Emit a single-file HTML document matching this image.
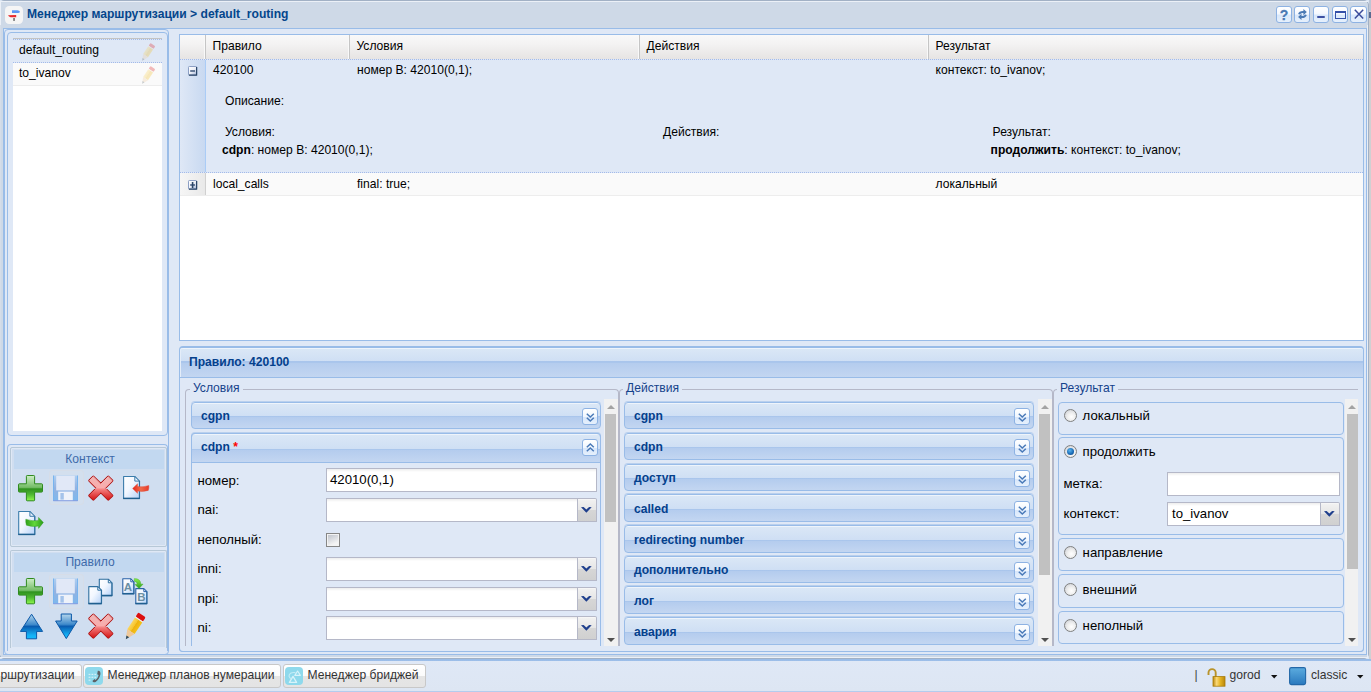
<!DOCTYPE html>
<html lang="ru">
<head>
<meta charset="utf-8">
<title>Менеджер маршрутизации</title>
<style>
html,body{margin:0;padding:0;overflow:hidden;}
body{width:1371px;height:692px;overflow:hidden;position:relative;background:#dbe6f4;font-family:"Liberation Sans",sans-serif;font-size:12.1px;color:#000;}
div,span,i,u,b{box-sizing:border-box;}
.a{position:absolute;}
.t{position:absolute;white-space:nowrap;line-height:14px;}
.b{font-weight:bold;}
.f{font-size:13.2px;line-height:15px;}
svg{position:absolute;overflow:visible;}
#win{position:absolute;left:-1px;top:0;width:1370px;height:659px;background:#ced9e7;border:1px solid #a2b1c5;border-radius:5px;}
.tool{position:absolute;top:6px;width:16px;height:17px;border:1px solid #8db2e3;border-radius:3px;background:linear-gradient(#fff 0%,#f4f8ff 45%,#d9e8fb 55%,#e6f0fc 100%);}
.frame{position:absolute;border:1px solid #99bce8;border-radius:4px;background:#dfe8f6;}
.acc{position:absolute;height:27px;border:1px solid #99bce8;border-radius:4px;background:linear-gradient(#eef4fb 0,#eef4fb 1px,#dae7f6 1px,#cfdff4 52%,#a9c5ec 52%,#aac6ec 56%,#b4ccee 57%,#c3d6f1 100%);box-shadow:0 -1px 0 rgba(153,188,232,0.55);}
.acc span{position:absolute;left:9px;top:6px;line-height:14px;font-weight:bold;color:#04408c;white-space:nowrap;}
.acc i{position:absolute;right:2px;top:5px;width:16px;height:17px;border:1px solid #8db2e3;border-radius:3px;background:linear-gradient(#fff 0%,#f1f7fe 50%,#d8e7fb 55%,#e6f0fc 100%);}
.inp{position:absolute;height:24px;border:1px solid #b5b8c8;background:#fff linear-gradient(#ededed 0,#fff 3px);}
.trig{position:absolute;width:19px;height:24px;border:1px solid #b5b8c8;border-left:0;border-radius:0 2px 0 0;background:linear-gradient(#f2f2f2 0%,#e6e6e6 48%,#d6d6d6 52%,#d0d0d0 100%);box-shadow:inset 0 1px 0 #f6f6f6;}
.radio{position:absolute;width:13px;height:13px;border-radius:50%;border:1px solid #7f8080;background:radial-gradient(circle at 58% 62%,#ffffff 0%,#efefef 40%,#c6c9d0 100%);}
.rp{position:absolute;border:1px solid #99bce8;border-radius:4px;background:#dfe8f6;}
.fs{position:absolute;border:1px solid #b5b8c8;border-radius:4px;}
.fsl{position:absolute;padding:0 3px;background:#dfe8f6;color:#15428b;line-height:14px;white-space:nowrap;}
.sb{position:absolute;width:14px;background:#f1f1f1;}
.sb u{position:absolute;left:1px;width:11px;background:#c1c1c1;}
.sb:before{content:"";position:absolute;left:3px;top:6px;border:4px solid transparent;border-top:0;border-bottom:4px solid #a3a3a3;}
.sb:after{content:"";position:absolute;left:3px;bottom:4px;border:4px solid transparent;border-bottom:0;border-top:4px solid #505050;}
.bg{position:absolute;border:1px solid #b7c8d7;border-radius:2px;background:#d0def0;box-shadow:inset 0 0 0 1px #dfe8f5;}
.bgh{position:absolute;left:3px;top:2px;right:2px;height:19px;background:#c2d8f0;color:#3e6aaa;text-align:center;line-height:18px;padding-left:2px;}
.gh{position:absolute;top:0;height:24px;border-right:1px solid #c5c5c5;box-shadow:inset -1px 0 0 #f9f9f9;}
.tb{position:absolute;top:664px;height:24px;border:1px solid #c8c8c8;border-radius:3px;background:linear-gradient(#ffffff 0%,#fbfbfb 48%,#e5e5e5 52%,#e4e4e4 100%);}
</style>
</head>
<body>

<svg width="0" height="0" style="left:0;top:0;"><defs><linearGradient id="gPlus" x1="0" y1="0" x2="0" y2="1"><stop offset="0" stop-color="#cdeec6"/><stop offset="0.47" stop-color="#74bd66"/><stop offset="0.53" stop-color="#2f921f"/><stop offset="0.75" stop-color="#4fb832"/><stop offset="1" stop-color="#8ef84c"/></linearGradient><linearGradient id="gX" x1="0" y1="0" x2="0" y2="1"><stop offset="0" stop-color="#f0b4b4"/><stop offset="0.48" stop-color="#f9acac"/><stop offset="0.58" stop-color="#f27878"/><stop offset="1" stop-color="#d61a1a"/></linearGradient><linearGradient id="gDoc" x1="0" y1="0" x2="1" y2="1"><stop offset="0" stop-color="#ffffff"/><stop offset="0.45" stop-color="#f2f7ff"/><stop offset="1" stop-color="#b5d2f8"/></linearGradient><linearGradient id="gUp" x1="0" y1="0" x2="0" y2="1"><stop offset="0" stop-color="#b5d6ec"/><stop offset="0.42" stop-color="#3f8acb"/><stop offset="0.5" stop-color="#0a5cb0"/><stop offset="0.85" stop-color="#14b0f4"/><stop offset="1" stop-color="#12bcfc"/></linearGradient><linearGradient id="gSave" x1="0" y1="0" x2="0" y2="1"><stop offset="0" stop-color="#a9cdf3"/><stop offset="0.5" stop-color="#8daee0"/><stop offset="1" stop-color="#74b4ee"/></linearGradient><linearGradient id="gRed" x1="0" y1="0" x2="1" y2="0"><stop offset="0" stop-color="#e8281c"/><stop offset="0.5" stop-color="#ee6a4a"/><stop offset="1" stop-color="#e83a2a"/></linearGradient><linearGradient id="gGreen" x1="0" y1="0" x2="1" y2="0"><stop offset="0" stop-color="#2fa01c"/><stop offset="0.5" stop-color="#62d83a"/><stop offset="1" stop-color="#2a9a1a"/></linearGradient><linearGradient id="gGreenV" x1="0" y1="0" x2="0" y2="1"><stop offset="0" stop-color="#8cf04c"/><stop offset="1" stop-color="#2a9a1a"/></linearGradient><linearGradient id="gLock" x1="0" y1="0" x2="1" y2="0"><stop offset="0" stop-color="#b8860b"/><stop offset="0.3" stop-color="#fbd978"/><stop offset="0.6" stop-color="#e5b422"/><stop offset="1" stop-color="#b8860b"/></linearGradient><linearGradient id="gSq" x1="0" y1="0" x2="0" y2="1"><stop offset="0" stop-color="#5cacdf"/><stop offset="1" stop-color="#2a79be"/></linearGradient><linearGradient id="gExp" x1="0" y1="0" x2="1" y2="1"><stop offset="0" stop-color="#ffffff"/><stop offset="0.5" stop-color="#eef1f8"/><stop offset="1" stop-color="#9fb0d4"/></linearGradient><linearGradient id="gPen" x1="0" y1="0" x2="1" y2="0"><stop offset="0" stop-color="#fbd560"/><stop offset="0.45" stop-color="#f6c62c"/><stop offset="0.5" stop-color="#eeb010"/><stop offset="1" stop-color="#f4c21a"/></linearGradient></defs></svg>
<div class="a" style="left:1369px;top:0;width:2px;height:659px;background:#cfd0d2;"></div>
<div class="a" style="left:1369px;top:0;width:2px;height:11px;background:#bcc6d6;"></div>
<div class="a" style="left:1369px;top:12px;width:2px;height:6px;background:#5a6a90;"></div>
<div id="win"></div>
<div class="a" style="left:0;top:1px;width:1368px;height:1px;background:#ebf0f7;"></div>
<div class="a" style="left:0;top:2px;width:1px;height:23px;background:#ebf0f7;"></div>
<div class="a" style="left:1367px;top:25px;width:1px;height:632px;background:#e9eef6;"></div>
<div class="a" style="left:0px;top:25px;width:1px;height:630px;background:#d5dde9;"></div>
<svg style="left:5px;top:6px;" width="18" height="18" viewBox="0 0 18 18"><rect x="0" y="0" width="18" height="18" rx="4.2" fill="#f5f5f5"/><path d="M7 4.2h5.4q2 0.3 2.6 1.6q-0.4 1.1-2 1.3h-6z" fill="#5b96f5"/><path d="M11.2 8.9v2.4h-5.6q-1.8-0.5-2.6-2z" fill="#e8282c"/><rect x="8.2" y="12" width="1.7" height="2.9" fill="#777"/></svg>
<div class="t b" style="left:27px;top:7px;color:#04468c;">Менеджер маршрутизации &gt; default_routing</div>
<div class="tool" style="left:1276px;"></div>
<div class="tool" style="left:1294px;"></div>
<div class="tool" style="left:1313px;"></div>
<div class="tool" style="left:1332px;"></div>
<div class="tool" style="left:1350px;width:17px;"></div>
<div class="t b" style="left:1279.8px;top:8px;color:#4a7ab5;font-size:14px;-webkit-text-stroke:0.3px #4a7ab5;">?</div>
<svg style="left:1298px;top:9px;" width="9" height="11" viewBox="0 0 9 11"><path d="M5.4 0L8.8 3.1 5.4 6.2V4.1Q2.6 3.9 1.9 5.6L0.1 5.1Q1 1.8 5.4 2z" fill="#4a7ab5"/><g transform="rotate(180 4.45 5.5)"><path d="M5.4 0L8.8 3.1 5.4 6.2V4.1Q2.6 3.9 1.9 5.6L0.1 5.1Q1 1.8 5.4 2z" fill="#4a7ab5"/></g></svg>
<div class="a" style="left:1317px;top:15.5px;width:8px;height:2.5px;background:#3c50a2;border-radius:1px;"></div>
<div class="a" style="left:1335px;top:10.5px;width:10.5px;height:8.3px;border:1.2px solid #3450a8;border-top-width:2.4px;"></div>
<svg style="left:1353.5px;top:9.4px;" width="11" height="11" viewBox="0 0 11 11"><path d="M0.8 0.8l8.4 8.6M9.2 0.8L0.8 9.4" stroke="#3b4c9b" stroke-width="1.5"/></svg>
<div class="a" style="left:3px;top:28px;width:1364px;height:627px;border:1px solid #99bce8;background:#dfe8f6;"></div>
<div class="a" style="left:4px;top:29px;width:165px;height:626px;border:1px solid #99bce8;border-radius:4px;"></div>
<div class="frame" style="left:7px;top:32px;width:161px;height:404px;"></div>
<div class="a" style="left:13px;top:38px;width:149px;height:393px;background:#fff;"></div>
<div class="a" style="left:13px;top:38px;width:149px;height:1px;background:#c4c4c4;"></div>
<div class="a" style="left:13px;top:39px;width:149px;height:24px;background:#dfe8f6;border-top:1px dotted #a3bae9;border-bottom:1px dotted #a3bae9;"></div>
<div class="a" style="left:13px;top:63px;width:149px;height:23px;background:#fafafa;border-bottom:1px solid #ededed;"></div>
<div class="t" style="left:19px;top:43px;">default_routing</div>
<div class="t" style="left:19px;top:66px;">to_ivanov</div>
<svg style="left:141.3px;top:43.8px;opacity:0.27;" width="13.2" height="17.16" viewBox="0 0 20 26"><g transform="rotate(33.5 10 13)"><rect x="5.6" y="-1.6" width="8.8" height="5.2" rx="1.4" fill="#dc0f0f"/><rect x="5.6" y="3.4" width="8.8" height="1.2" fill="#f1efe6"/><rect x="5.6" y="4.6" width="8.8" height="14" fill="url(#gPen)"/><path d="M5.6 18.6h8.8L10 27.8z" fill="#efc89a"/><path d="M8.3 24.2h3.4L10 27.8z" fill="#2e4a5e"/></g></svg>
<svg style="left:141.3px;top:66.8px;opacity:0.27;" width="13.2" height="17.16" viewBox="0 0 20 26"><g transform="rotate(33.5 10 13)"><rect x="5.6" y="-1.6" width="8.8" height="5.2" rx="1.4" fill="#dc0f0f"/><rect x="5.6" y="3.4" width="8.8" height="1.2" fill="#f1efe6"/><rect x="5.6" y="4.6" width="8.8" height="14" fill="url(#gPen)"/><path d="M5.6 18.6h8.8L10 27.8z" fill="#efc89a"/><path d="M8.3 24.2h3.4L10 27.8z" fill="#2e4a5e"/></g></svg>
<div class="frame" style="left:7px;top:444px;width:161px;height:207px;border-bottom:0;border-radius:4px 4px 0 0;"></div>
<div class="bg" style="left:10px;top:447px;width:157px;height:100px;"><div class="bgh">Контекст</div></div>
<div class="bg" style="left:10px;top:550px;width:157px;height:98px;border-bottom:0;border-radius:2px 2px 0 0;"><div class="bgh">Правило</div></div>
<div class="a" style="left:49px;top:470px;width:35px;height:35px;border:1px solid #d6dde8;border-radius:3px;background:#d3dfee;"></div>
<div class="a" style="left:49px;top:574px;width:35px;height:35px;border:1px solid #d6dde8;border-radius:3px;background:#d3dfee;"></div>
<svg style="left:18px;top:474.7px;" width="26" height="27" viewBox="0 0 26 27"><path d="M9.2 0.5h6.6a0.8 0.8 0 0 1 0.8 0.8v7.5h7.1a0.8 0.8 0 0 1 0.8 0.8v6.7a0.8 0.8 0 0 1 -0.8 0.8h-7.1v7.9a0.8 0.8 0 0 1 -0.8 0.8h-6.6a0.8 0.8 0 0 1 -0.8 -0.8v-7.9h-7.1a0.8 0.8 0 0 1 -0.8 -0.8v-6.7a0.8 0.8 0 0 1 0.8 -0.8h7.1v-7.5a0.8 0.8 0 0 1 0.8 -0.8z" fill="url(#gPlus)" stroke="#2f8a1e" stroke-width="1"/></svg>
<svg style="opacity:0.9;left:53px;top:474.5px;" width="25" height="27" viewBox="0 0 25 27"><rect x="0.5" y="0.5" width="24" height="25.4" fill="url(#gSave)"/><rect x="0" y="0.5" width="1" height="25.4" fill="#6fb0f0"/><rect x="24" y="0.5" width="1" height="25.4" fill="#6fb0f0"/><rect x="3.2" y="0.8" width="18.6" height="14.6" fill="#e3e9f8"/><rect x="5.2" y="16.6" width="14.6" height="9" fill="#f2f5fc"/><rect x="7.4" y="18" width="3.4" height="6.6" fill="#9fc0ea"/><rect x="0.3" y="25.3" width="24.4" height="0.9" fill="#7d92e0"/></svg>
<svg style="left:88px;top:474.6px;" width="26" height="27" viewBox="0 0 26 27"><path d="M24.15 5.64 L16.69 13.10 L24.15 20.56 L20.26 24.45 L12.80 16.99 L5.34 24.45 L1.45 20.56 L8.91 13.10 L1.45 5.64 L5.34 1.75 L12.80 9.21 L20.26 1.75Z" fill="#b01515" stroke="#b01515" stroke-width="2.4" stroke-linejoin="round"/><path d="M24.15 5.64 L16.69 13.10 L24.15 20.56 L20.26 24.45 L12.80 16.99 L5.34 24.45 L1.45 20.56 L8.91 13.10 L1.45 5.64 L5.34 1.75 L12.80 9.21 L20.26 1.75Z" fill="url(#gX)" stroke="url(#gX)" stroke-width="1.0" stroke-linejoin="round"/></svg>
<svg style="left:118px;top:474px;" width="32" height="27" viewBox="0 0 32 27"><path d="M5.6 2.5h11.2l4.6 4.6v17.4h-15.8z" fill="url(#gDoc)" stroke="#3b7cab" stroke-width="1.1" stroke-linejoin="round"/><path d="M16.8 2.5v4.6h4.6z" fill="#e8f1fc" stroke="#3b7cab" stroke-width="0.99" stroke-linejoin="round"/><path d="M5.2 24.4h16.6" stroke="#1f5f8f" stroke-width="1.5"/><path d="M21.6 7.1v17.4" stroke="#2a6a9a" stroke-width="0.8"/><path d="M14.6 14.5L19.5 9.8L19.6 12.5Q25 13.5 30.8 11.5Q31.1 14 30.3 16.4Q24.5 18.2 19.6 17.1L19.5 19.3Z" fill="url(#gRed)" stroke="#e0402c" stroke-width="0.4"/></svg>
<svg style="left:18px;top:510.2px;" width="27" height="26" viewBox="0 0 27 26"><path d="M0.7 1.5h11.2l4.8 4.8v18.2h-16z" fill="url(#gDoc)" stroke="#3b7cab" stroke-width="1.1" stroke-linejoin="round"/><path d="M11.9 1.5v4.8h4.8z" fill="#e8f1fc" stroke="#3b7cab" stroke-width="0.99" stroke-linejoin="round"/><path d="M0.3 24.4h16.8" stroke="#1f5f8f" stroke-width="1.5"/><path d="M16.9 6.3v18.2" stroke="#2a6a9a" stroke-width="0.8"/><path d="M25.4 12.4L20.6 7.4L20.4 10.4Q14.6 11.6 7.8 9.2Q7.4 12.6 8.4 15.2Q14.8 17.4 20.4 16L20.6 18.4Z" fill="url(#gGreen)" stroke="#2c961a" stroke-width="0.4"/></svg>
<svg style="left:18px;top:578.4px;" width="26" height="27" viewBox="0 0 26 27"><path d="M9.2 0.5h6.6a0.8 0.8 0 0 1 0.8 0.8v7.5h7.1a0.8 0.8 0 0 1 0.8 0.8v6.7a0.8 0.8 0 0 1 -0.8 0.8h-7.1v7.9a0.8 0.8 0 0 1 -0.8 0.8h-6.6a0.8 0.8 0 0 1 -0.8 -0.8v-7.9h-7.1a0.8 0.8 0 0 1 -0.8 -0.8v-6.7a0.8 0.8 0 0 1 0.8 -0.8h7.1v-7.5a0.8 0.8 0 0 1 0.8 -0.8z" fill="url(#gPlus)" stroke="#2f8a1e" stroke-width="1"/></svg>
<svg style="opacity:0.9;left:53px;top:578.3px;" width="25" height="27" viewBox="0 0 25 27"><rect x="0.5" y="0.5" width="24" height="25.4" fill="url(#gSave)"/><rect x="0" y="0.5" width="1" height="25.4" fill="#6fb0f0"/><rect x="24" y="0.5" width="1" height="25.4" fill="#6fb0f0"/><rect x="3.2" y="0.8" width="18.6" height="14.6" fill="#e3e9f8"/><rect x="5.2" y="16.6" width="14.6" height="9" fill="#f2f5fc"/><rect x="7.4" y="18" width="3.4" height="6.6" fill="#9fc0ea"/><rect x="0.3" y="25.3" width="24.4" height="0.9" fill="#7d92e0"/></svg>
<svg style="left:88.1px;top:577.6px;" width="26" height="27" viewBox="0 0 26 27"><path d="M11.3 1.2h9l3.6 3.6v12.8h-12.6z" fill="url(#gDoc)" stroke="#2f6f9f" stroke-width="1.1" stroke-linejoin="round"/><path d="M20.3 1.2v3.6h3.6z" fill="#e8f1fc" stroke="#2f6f9f" stroke-width="0.99" stroke-linejoin="round"/><path d="M10.9 17.5h13.4" stroke="#1f5f8f" stroke-width="1.5"/><path d="M24.1 4.8v12.8" stroke="#2a6a9a" stroke-width="0.8"/><path d="M0.8 8.6h9l3.6 3.6v13.4h-12.6z" fill="url(#gDoc)" stroke="#2f6f9f" stroke-width="1.1" stroke-linejoin="round"/><path d="M9.8 8.6v3.6h3.6z" fill="#e8f1fc" stroke="#2f6f9f" stroke-width="0.99" stroke-linejoin="round"/><path d="M0.4 25.5h13.4" stroke="#1f5f8f" stroke-width="1.5"/><path d="M13.6 12.2v13.4" stroke="#2a6a9a" stroke-width="0.8"/></svg>
<svg style="left:122.3px;top:578.2px;" width="27" height="27" viewBox="0 0 27 27"><path d="M0.8 0.8h8l3 3v12h-11z" fill="url(#gDoc)" stroke="#2a62a8" stroke-width="1.1" stroke-linejoin="round"/><path d="M8.8 0.8v3h3z" fill="#e8f1fc" stroke="#2a62a8" stroke-width="0.99" stroke-linejoin="round"/><path d="M0.4 15.7h11.8" stroke="#1f5f8f" stroke-width="1.5"/><path d="M12 3.8v12" stroke="#2a6a9a" stroke-width="0.8"/><path d="M13.8 10.6h8l3 3v12h-11z" fill="url(#gDoc)" stroke="#2a62a8" stroke-width="1.1" stroke-linejoin="round"/><path d="M21.8 10.6v3h3z" fill="#e8f1fc" stroke="#2a62a8" stroke-width="0.99" stroke-linejoin="round"/><path d="M13.4 25.5h11.8" stroke="#1f5f8f" stroke-width="1.5"/><path d="M25 13.6v12" stroke="#2a6a9a" stroke-width="0.8"/><text x="6" y="12.6" font-family="Liberation Sans, sans-serif" font-weight="bold" font-size="11.5" fill="#6b8fa3" text-anchor="middle">A</text><text x="19.4" y="23" font-family="Liberation Sans, sans-serif" font-weight="bold" font-size="11.5" fill="#6b8fa3" text-anchor="middle">B</text><path d="M12.3 0.6q6.4 0 6.6 5.6l2.2-0.2-4 4.6-4.2-4.2 2.4-0.2q-0.2-2.6-3-3z" fill="url(#gGreenV)" stroke="#3aa822" stroke-width="0.4"/></svg>
<svg style="left:19.6px;top:613px;" width="24" height="27" viewBox="0 0 24 27"><path d="M11.6 1.2L22.6 18.4h-6v7.4h-10.2v-7.4h-6z" fill="url(#gUp)" stroke="#0b58a8" stroke-width="1" stroke-linejoin="round"/></svg>
<svg style="left:54.8px;top:613px;" width="24" height="27" viewBox="0 0 24 27"><path d="M6.2 1h10.2v7h5.8L11.3 25.6 0.6 8h5.6z" fill="url(#gUp)" stroke="#0b58a8" stroke-width="1" stroke-linejoin="round"/></svg>
<svg style="left:88px;top:613.2px;" width="26" height="27" viewBox="0 0 26 27"><path d="M24.15 5.64 L16.69 13.10 L24.15 20.56 L20.26 24.45 L12.80 16.99 L5.34 24.45 L1.45 20.56 L8.91 13.10 L1.45 5.64 L5.34 1.75 L12.80 9.21 L20.26 1.75Z" fill="#b01515" stroke="#b01515" stroke-width="2.4" stroke-linejoin="round"/><path d="M24.15 5.64 L16.69 13.10 L24.15 20.56 L20.26 24.45 L12.80 16.99 L5.34 24.45 L1.45 20.56 L8.91 13.10 L1.45 5.64 L5.34 1.75 L12.80 9.21 L20.26 1.75Z" fill="url(#gX)" stroke="url(#gX)" stroke-width="1.0" stroke-linejoin="round"/></svg>
<svg style="left:124.2px;top:614px;opacity:1;" width="20" height="26" viewBox="0 0 20 26"><g transform="rotate(33.5 10 13)"><rect x="5.6" y="-1.6" width="8.8" height="5.2" rx="1.4" fill="#dc0f0f"/><rect x="5.6" y="3.4" width="8.8" height="1.2" fill="#f1efe6"/><rect x="5.6" y="4.6" width="8.8" height="14" fill="url(#gPen)"/><path d="M5.6 18.6h8.8L10 27.8z" fill="#efc89a"/><path d="M8.3 24.2h3.4L10 27.8z" fill="#2e4a5e"/></g></svg>
<div class="a" style="left:179px;top:34px;width:1185px;height:307px;border:1px solid #99bce8;background:#fff;"></div>
<div class="a" style="left:180px;top:35px;width:1183px;height:24px;background:linear-gradient(#f9f9f9 0%,#f3f2f2 40%,#e6e4e3 100%);">
<div class="gh" style="left:0px;width:26px;"><span class="t" style="left:7.5px;top:4px;"></span></div>
<div class="gh" style="left:25px;width:145px;"><span class="t" style="left:7.5px;top:4px;">Правило</span></div>
<div class="gh" style="left:169px;width:291px;"><span class="t" style="left:7.5px;top:4px;">Условия</span></div>
<div class="gh" style="left:459px;width:290px;"><span class="t" style="left:7.5px;top:4px;">Действия</span></div>
<div class="gh" style="left:748px;width:435px;border-right:0;box-shadow:none;"><span class="t" style="left:7.5px;top:4px;">Результат</span></div>
</div>
<div class="a" style="left:180px;top:59px;width:1183px;height:114px;background:#dfe8f6;border-top:1px dotted #a3bae9;border-bottom:1px dotted #a3bae9;"></div>
<div class="a" style="left:180px;top:60px;width:26px;height:112px;background:linear-gradient(90deg,#dfe8f6,#c8d9f1);border-right:1px solid #aaccf6;"></div>
<div class="a" style="left:180px;top:173px;width:1183px;height:23px;background:#fafafa;border-bottom:1px solid #ededed;"></div>
<div class="a" style="left:180px;top:173px;width:26px;height:22px;background:linear-gradient(90deg,#f6f6f6,#e9e9e9);border-right:1px solid #d0d0d0;"></div>
<svg style="left:188px;top:66px;" width="10" height="11" viewBox="0 0 10 11"><rect x="0.5" y="0.5" width="8.2" height="8.6" rx="0.8" fill="url(#gExp)" stroke="#8c9fc4" stroke-width="1"/><path d="M8.6 1v8.2M0.9 9.2h8.3" stroke="#2b4668" stroke-width="1.2" fill="none"/><rect x="2.2" y="4.1" width="4.8" height="1.8" fill="#5a6f90"/></svg>
<svg style="left:188px;top:180px;" width="10" height="11" viewBox="0 0 10 11"><rect x="0.5" y="0.5" width="8.2" height="8.6" rx="0.8" fill="url(#gExp)" stroke="#8c9fc4" stroke-width="1"/><path d="M8.6 1v8.2M0.9 9.2h8.3" stroke="#2b4668" stroke-width="1.2" fill="none"/><rect x="2.2" y="4.1" width="4.8" height="1.8" fill="#5a6f90"/><rect x="3.8" y="2" width="1.6" height="6" fill="#2b4668"/></svg>
<div class="t" style="left:213px;top:63px;">420100</div>
<div class="t" style="left:357px;top:63px;">номер B: 42010(0,1);</div>
<div class="t" style="left:935.6px;top:63px;">контекст: to_ivanov;</div>
<div class="t" style="left:225px;top:94px;">Описание:</div>
<div class="t" style="left:225px;top:125px;">Условия:</div>
<div class="t" style="left:663px;top:125px;">Действия:</div>
<div class="t" style="left:992.6px;top:125px;">Результат:</div>
<div class="t" style="left:222px;top:143px;"><b>cdpn</b>: номер B: 42010(0,1);</div>
<div class="t" style="left:990.6px;top:143px;"><b>продолжить</b>: контекст: to_ivanov;</div>
<div class="t" style="left:213px;top:177px;">local_calls</div>
<div class="t" style="left:357px;top:177px;">final: true;</div>
<div class="t" style="left:935.6px;top:177px;">локальный</div>
<div class="a" style="left:179px;top:346px;width:1185px;height:306px;border:1px solid #99bce8;border-top-width:2px;border-radius:4px 4px 4px 4px;background:#dfe8f6;"></div>
<div class="a" style="left:180px;top:348px;width:1183px;height:30px;border-radius:3px 3px 0 0;background:linear-gradient(#eef4fb 0,#eef4fb 1px,#dae7f6 1px,#cfdff4 46%,#a9c5ec 46%,#aac6ec 50%,#b4ccee 51%,#c3d6f1 100%);box-shadow:inset 1px 0 0 #e4edf9;border-bottom:1px solid #99bce8;"></div>
<div class="t" style="left:189px;top:355px;font-weight:bold;color:#04408c;">Правило: 420100</div>
<div class="fs" style="left:185px;top:389px;width:434px;height:257px;border-bottom:0;border-radius:4px 4px 0 0;"></div>
<div class="fsl" style="left:190px;top:381px;">Условия</div>
<div class="fs" style="left:619px;top:389px;width:434px;height:257px;border-bottom:0;border-radius:4px 4px 0 0;"></div>
<div class="fsl" style="left:623px;top:381px;">Действия</div>
<div class="fs" style="left:1053px;top:389px;width:305px;height:257px;border-bottom:0;border-radius:4px 0 0 0;border-right:0;"></div>
<div class="fsl" style="left:1057px;top:381px;">Результат</div>
<div class="acc" style="left:191px;top:402px;width:410px;"><span>cgpn</span><i></i></div>
<svg style="left:585.8px;top:412.6px;" width="9" height="9" viewBox="0 0 9 9"><path d="M0.8 0.8L4.3 4l3.5-3.2M0.8 4.8L4.3 8l3.5-3.2" fill="none" stroke="#4a7ab8" stroke-width="1.5"/></svg>
<div class="a" style="left:191px;top:433px;width:410px;height:213px;border:1px solid #99bce8;border-bottom:0;border-radius:4px 4px 0 0;"></div>
<div class="acc" style="left:191px;top:433px;width:410px;height:30px;border-radius:4px 4px 0 0;"><span>cdpn <b style="color:#f00;font-weight:bold;">*</b></span><i></i></div>
<svg style="left:585.8px;top:442.8px;" width="9" height="9" viewBox="0 0 9 9"><path d="M0.8 4.2L4.3 1l3.5 3.2M0.8 8.2L4.3 5l3.5 3.2" fill="none" stroke="#4a7ab8" stroke-width="1.5"/></svg>
<div class="acc" style="left:624px;top:402px;width:410px;height:27px;"><span style="top:6px;">cgpn</span><i style="top:5px;right:3px;"></i></div>
<svg style="left:1018px;top:412.6px;" width="9" height="9" viewBox="0 0 9 9"><path d="M0.8 0.8L4.3 4l3.5-3.2M0.8 4.8L4.3 8l3.5-3.2" fill="none" stroke="#4a7ab8" stroke-width="1.5"/></svg>
<div class="acc" style="left:624px;top:433px;width:410px;height:27px;"><span style="top:6px;">cdpn</span><i style="top:5px;right:3px;"></i></div>
<svg style="left:1018px;top:443.6px;" width="9" height="9" viewBox="0 0 9 9"><path d="M0.8 0.8L4.3 4l3.5-3.2M0.8 4.8L4.3 8l3.5-3.2" fill="none" stroke="#4a7ab8" stroke-width="1.5"/></svg>
<div class="acc" style="left:624px;top:464px;width:410px;height:27px;"><span style="top:6px;">доступ</span><i style="top:5px;right:3px;"></i></div>
<svg style="left:1018px;top:474.6px;" width="9" height="9" viewBox="0 0 9 9"><path d="M0.8 0.8L4.3 4l3.5-3.2M0.8 4.8L4.3 8l3.5-3.2" fill="none" stroke="#4a7ab8" stroke-width="1.5"/></svg>
<div class="acc" style="left:624px;top:494px;width:410px;height:28px;"><span style="top:7px;">called</span><i style="top:6px;right:3px;"></i></div>
<svg style="left:1018px;top:505.6px;" width="9" height="9" viewBox="0 0 9 9"><path d="M0.8 0.8L4.3 4l3.5-3.2M0.8 4.8L4.3 8l3.5-3.2" fill="none" stroke="#4a7ab8" stroke-width="1.5"/></svg>
<div class="acc" style="left:624px;top:525px;width:410px;height:28px;"><span style="top:7px;">redirecting number</span><i style="top:6px;right:3px;"></i></div>
<svg style="left:1018px;top:536.6px;" width="9" height="9" viewBox="0 0 9 9"><path d="M0.8 0.8L4.3 4l3.5-3.2M0.8 4.8L4.3 8l3.5-3.2" fill="none" stroke="#4a7ab8" stroke-width="1.5"/></svg>
<div class="acc" style="left:624px;top:556px;width:410px;height:27px;"><span style="top:6px;">дополнительно</span><i style="top:5px;right:3px;"></i></div>
<svg style="left:1018px;top:566.6px;" width="9" height="9" viewBox="0 0 9 9"><path d="M0.8 0.8L4.3 4l3.5-3.2M0.8 4.8L4.3 8l3.5-3.2" fill="none" stroke="#4a7ab8" stroke-width="1.5"/></svg>
<div class="acc" style="left:624px;top:586px;width:410px;height:28px;"><span style="top:7px;">лог</span><i style="top:6px;right:3px;"></i></div>
<svg style="left:1018px;top:597.6px;" width="9" height="9" viewBox="0 0 9 9"><path d="M0.8 0.8L4.3 4l3.5-3.2M0.8 4.8L4.3 8l3.5-3.2" fill="none" stroke="#4a7ab8" stroke-width="1.5"/></svg>
<div class="acc" style="left:624px;top:617px;width:410px;height:28px;"><span style="top:7px;">авария</span><i style="top:6px;right:3px;"></i></div>
<svg style="left:1018px;top:628.6px;" width="9" height="9" viewBox="0 0 9 9"><path d="M0.8 0.8L4.3 4l3.5-3.2M0.8 4.8L4.3 8l3.5-3.2" fill="none" stroke="#4a7ab8" stroke-width="1.5"/></svg>
<div class="t f" style="left:197.5px;top:473px;">номер:</div>
<div class="inp" style="left:326px;top:468px;width:271px;"><span class="t f" style="left:3px;top:3px;">42010(0,1)</span></div>
<div class="t f" style="left:197.5px;top:502px;">nai:</div>
<div class="inp" style="left:326px;top:498px;width:252px;"></div>
<div class="trig" style="left:578px;top:498px;"></div>
<svg style="left:581.1px;top:506.6px;" width="11" height="6" viewBox="0 0 11 6"><path d="M0 0.2L2.6 0 5.35 2.5 8.1 0 10.7 0.2 5.35 5.7z" fill="#1f3f8c"/></svg>
<div class="t f" style="left:197.5px;top:532px;">неполный:</div>
<div class="a" style="left:326px;top:533px;width:14px;height:14px;border:1px solid #868686;box-shadow:inset 0 0 0 1px #f3f3f3;background:linear-gradient(155deg,#c2c6ce 10%,#dcdee2 45%,#f4f4f4 75%);"></div>
<div class="t f" style="left:197.5px;top:561px;">inni:</div>
<div class="inp" style="left:326px;top:557px;width:252px;"></div>
<div class="trig" style="left:578px;top:557px;"></div>
<svg style="left:581.1px;top:565.6px;" width="11" height="6" viewBox="0 0 11 6"><path d="M0 0.2L2.6 0 5.35 2.5 8.1 0 10.7 0.2 5.35 5.7z" fill="#1f3f8c"/></svg>
<div class="t f" style="left:197.5px;top:591px;">npi:</div>
<div class="inp" style="left:326px;top:587px;width:252px;"></div>
<div class="trig" style="left:578px;top:587px;"></div>
<svg style="left:581.1px;top:595.6px;" width="11" height="6" viewBox="0 0 11 6"><path d="M0 0.2L2.6 0 5.35 2.5 8.1 0 10.7 0.2 5.35 5.7z" fill="#1f3f8c"/></svg>
<div class="t f" style="left:197.5px;top:620px;">ni:</div>
<div class="inp" style="left:326px;top:616px;width:252px;"></div>
<div class="trig" style="left:578px;top:616px;"></div>
<svg style="left:581.1px;top:624.6px;" width="11" height="6" viewBox="0 0 11 6"><path d="M0 0.2L2.6 0 5.35 2.5 8.1 0 10.7 0.2 5.35 5.7z" fill="#1f3f8c"/></svg>
<div class="sb" style="left:604px;top:399px;height:247px;"><u style="top:15px;height:108px;"></u></div>
<div class="sb" style="left:1038px;top:399px;height:247px;"><u style="top:15px;height:161px;"></u></div>
<div class="sb" style="left:1345px;top:399px;height:247px;width:13px;overflow:hidden;"><u style="left:2px;top:15px;height:155px;"></u></div>
<div class="rp" style="left:1058px;top:402px;width:286px;height:33px;"></div>
<div class="radio" style="left:1064px;top:409px;"></div>
<div class="t f" style="left:1082.6px;top:408px;">локальный</div>
<div class="rp" style="left:1058px;top:437px;width:286px;height:98px;"></div>
<div class="radio" style="left:1064px;top:445px;"><div class="a" style="left:2px;top:2px;width:7px;height:7px;border-radius:50%;background:radial-gradient(circle at 40% 35%,#58b4ee,#1868b4 60%,#0b3c78);"></div></div>
<div class="t f" style="left:1082.6px;top:444px;">продолжить</div>
<div class="rp" style="left:1058px;top:538px;width:286px;height:33px;"></div>
<div class="radio" style="left:1064px;top:546px;"></div>
<div class="t f" style="left:1082.6px;top:545px;">направление</div>
<div class="rp" style="left:1058px;top:574px;width:286px;height:34px;"></div>
<div class="radio" style="left:1064px;top:583px;"></div>
<div class="t f" style="left:1082.6px;top:582px;">внешний</div>
<div class="rp" style="left:1058px;top:611px;width:286px;height:33px;"></div>
<div class="radio" style="left:1064px;top:619px;"></div>
<div class="t f" style="left:1082.6px;top:618px;">неполный</div>
<div class="t f" style="left:1063.5px;top:476px;">метка:</div>
<div class="inp" style="left:1167px;top:472px;width:173px;"></div>
<div class="t f" style="left:1063.5px;top:506px;">контекст:</div>
<div class="inp" style="left:1167px;top:502px;width:154px;"><span class="t f" style="left:4px;top:3px;">to_ivanov</span></div>
<div class="trig" style="left:1321px;top:502px;"></div>
<svg style="left:1324.2px;top:510.6px;" width="11" height="6" viewBox="0 0 11 6"><path d="M0 0.2L2.6 0 5.35 2.5 8.1 0 10.7 0.2 5.35 5.7z" fill="#1f3f8c"/></svg>
<div class="a" style="left:180px;top:646px;width:1183px;height:5px;background:#dfe8f6;"></div>
<div class="a" style="left:179px;top:646px;width:1185px;height:6px;border:1px solid #99bce8;border-top:0;border-radius:0 0 4px 4px;"></div>
<div class="a" style="left:0px;top:657px;width:1368px;height:1px;background:#ebf0f7;"></div>
<div class="a" style="left:0;top:659px;width:1371px;height:33px;background:linear-gradient(#99bce8 0,#9cbee9 2px,#dfe8f6 2px,#dde6f3 31px,#dde6f3 32px,#b4ccee 32px);"></div>
<div class="tb" style="left:-20px;width:102px;"><span class="t" style="left:19.5px;top:3px;color:#333;">ршрутизации</span></div>
<div class="tb" style="left:83px;width:198px;"><span class="t" style="left:23.5px;top:3px;color:#333;">Менеджер планов нумерации</span></div>
<div class="tb" style="left:283px;width:143px;"><span class="t" style="left:23.5px;top:3px;color:#333;">Менеджер бриджей</span></div>
<svg style="left:85px;top:667px;" width="18" height="18" viewBox="0 0 18 18"><rect x="0" y="0" width="18" height="18" rx="4" fill="#8ed9ec"/><rect x="3.6" y="6.8" width="1.8" height="1.2" fill="#d3f0f8"/><rect x="6.5" y="6.8" width="1.8" height="1.2" fill="#d3f0f8"/><rect x="9.4" y="6.8" width="1.8" height="1.2" fill="#d3f0f8"/><rect x="3.6" y="9.7" width="1.8" height="1.2" fill="#d3f0f8"/><rect x="6.5" y="9.7" width="1.8" height="1.2" fill="#d3f0f8"/><rect x="9.4" y="9.7" width="1.8" height="1.2" fill="#d3f0f8"/><rect x="3.6" y="12.6" width="1.8" height="1.2" fill="#d3f0f8"/><path d="M12.8 3.7C14.8 3.3 15.7 5 15.4 7.2C15 10.4 13 13.4 10.6 15C9.4 15.7 7.9 15.3 7.4 14L9.5 12.1L10.6 12.9C12 11.8 13.2 10 13.6 7.9L12.2 7.3Z" fill="#5c6165"/></svg>
<svg style="left:285px;top:667px;" width="18" height="18" viewBox="0 0 18 18"><rect x="0" y="0" width="18" height="18" rx="4" fill="#8ed9ec"/><path d="M12.6 4L15.4 8.4H9.8z" fill="none" stroke="#d8f3fa" stroke-width="1.1" stroke-linejoin="round"/><path d="M8 9.4L11.6 15.4H4.4z" fill="none" stroke="#d8f3fa" stroke-width="1.3" stroke-linejoin="round"/><path d="M10.4 5.6q-6.4-0.6-6.4 3.6q0.6 2 2.4 2.6" fill="none" stroke="#c4ecf6" stroke-width="1.1"/></svg>
<div class="t" style="left:1194.5px;top:668px;color:#444;">|</div>
<svg style="left:1206.5px;top:667.8px;" width="19" height="19" viewBox="0 0 19 19"><path d="M1.5 7v-2.3a3.6 3.6 0 0 1 7.2 0v4.6" fill="none" stroke="#b8932a" stroke-width="1.9"/><rect x="6" y="8.6" width="12" height="9.6" fill="url(#gLock)" stroke="#a87c0a" stroke-width="0.8"/></svg>
<svg style="left:1289px;top:667px;" width="18" height="19" viewBox="0 0 18 19"><rect x="0.6" y="0.6" width="16" height="17" rx="1.8" fill="url(#gSq)" stroke="#2368a8" stroke-width="1.1"/></svg>
<svg style="left:1271px;top:675px;" width="7" height="4" viewBox="0 0 7 4"><path d="M0 0h6.4L3.2 3.4z" fill="#111"/></svg>
<svg style="left:1357px;top:675px;" width="7" height="4" viewBox="0 0 7 4"><path d="M0 0h6.4L3.2 3.4z" fill="#111"/></svg>
<div class="t" style="left:1229.5px;top:668px;color:#333;">gorod</div>
<div class="t" style="left:1311px;top:668px;color:#333;">classic</div>
</body>
</html>
